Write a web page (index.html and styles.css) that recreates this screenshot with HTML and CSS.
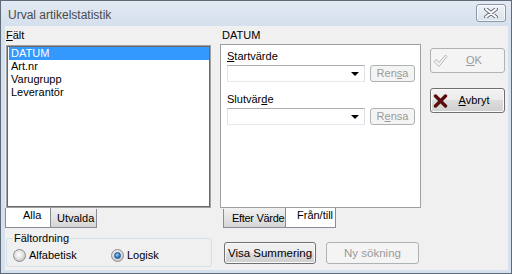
FILE: index.html
```html
<!DOCTYPE html>
<html lang="sv">
<head>
    <meta charset="UTF-8">
    <title>Urval artikelstatistik</title>
    <link rel="stylesheet" href="styles.css">
</head>
<body>
    <div class="window">
        <!-- Title bar -->
        <div class="titlebar">
            <span class="title">Urval artikelstatistik</span>
            <div class="close-btn">
                <svg width="14" height="10" viewBox="0 0 14 10">
                    <path d="M2 1 L12 9 M12 1 L2 9" stroke="#6a7280" stroke-width="4" stroke-linecap="round"/>
                    <path d="M2 1 L12 9 M12 1 L2 9" stroke="#ffffff" stroke-width="2" stroke-linecap="round"/>
                </svg>
            </div>
        </div>

        <div class="client">
            <!-- Left column: field list -->
            <div class="col-left">
                <div class="label"><u>F</u>ält</div>
                <div class="listbox">
                    <div class="item selected">DATUM</div>
                    <div class="item">Art.nr</div>
                    <div class="item">Varugrupp</div>
                    <div class="item">Leverantör</div>
                </div>
                <div class="tabs">
                    <div class="tab active tab-alla">Alla</div>
                    <div class="tab tab-utvalda">Utvalda</div>
                </div>
                <fieldset class="group">
                    <legend>Fältordning</legend>
                    <div class="radios">
                        <label class="radio-opt first"><span class="radio"></span>Alfabetisk</label>
                        <label class="radio-opt"><span class="radio checked"></span>Logisk</label>
                    </div>
                </fieldset>
            </div>

            <!-- Middle column: value range -->
            <div class="col-mid">
                <div class="label label-datum">DATUM</div>
                <div class="panel">
                    <div class="field-label"><u>S</u>tartvärde</div>
                    <div class="field-row">
                        <div class="combo"><span class="arrow"></span></div>
                        <div class="btn disabled rensa">Ren<u>s</u>a</div>
                    </div>
                    <div class="field-label second">Slutvär<u>d</u>e</div>
                    <div class="field-row">
                        <div class="combo"><span class="arrow"></span></div>
                        <div class="btn disabled rensa">R<u>e</u>nsa</div>
                    </div>
                </div>
                <div class="tabs">
                    <div class="tab tab-efter">Efter Värde</div>
                    <div class="tab active tab-fran">Från/till</div>
                </div>
                <div class="bottom-buttons">
                    <div class="btn wide">Visa Summering</div>
                    <div class="btn wide disabled">Ny sökning</div>
                </div>
            </div>

            <!-- Right column: dialog buttons -->
            <div class="col-right">
                <div class="btn dialog disabled">
                    <svg class="icon" width="15" height="14" viewBox="0 0 15 14">
                        <polygon points="1,7.5 3.5,5.5 6,8.5 12.5,1 14,2.5 6,12.5" fill="none" stroke="#b8b8b8" stroke-width="1"/>
                    </svg>
                    <span class="btn-text"><u>O</u>K</span>
                </div>
                <div class="btn dialog">
                    <svg class="icon" width="15" height="14" viewBox="0 0 15 14">
                        <path d="M2.5 2 L12.5 12 M12.5 2 L2.5 12" stroke="#5a0c0c" stroke-width="3.4" stroke-linecap="round"/>
                    </svg>
                    <span class="btn-text"><u>A</u>vbryt</span>
                </div>
            </div>
        </div>
    </div>
</body>
</html>
```

FILE: styles.css
```css
/* Global */
body {
    margin: 0;
    font-family: "Liberation Sans", Arial, sans-serif;
    font-size: 11px;
    color: #000;
}

u {
    text-decoration: underline;
    text-underline-offset: 1px;
}

/* Window frame */
.window {
    width: 512px;
    height: 274px;
    box-sizing: border-box;
    border: 1px solid #5f6b79;
    background: #d6e1ee;
    display: flex;
    flex-direction: column;
}

.titlebar {
    height: 25px;
    display: flex;
    align-items: flex-start;
    justify-content: space-between;
    padding: 0 5px 0 7px;
    background: linear-gradient(#e2e9f3, #d4e0ed);
}

.title {
    font-size: 12px;
    line-height: 14px;
    margin-top: 7px;
    color: #4a4a4a;
}

.close-btn {
    width: 30px;
    height: 18px;
    box-sizing: border-box;
    margin-top: 3px;
    border: 1px solid #8c98a8;
    border-radius: 3px;
    background: linear-gradient(#eef2f7, #d9e2ec);
    box-shadow: inset 0 0 0 1px rgba(255, 255, 255, 0.7);
    display: flex;
    align-items: center;
    justify-content: center;
}

.client {
    flex: 1;
    margin: 0 3px 3px 4px;
    padding: 3px 0 0 1px;
    background: #f0f0f0;
    display: flex;
    align-items: flex-start;
}

.label {
    height: 13px;
    line-height: 13px;
}

/* Left column */
.col-left {
    width: 206px;
    display: flex;
    flex-direction: column;
}

.listbox {
    margin-top: 3px;
    width: 205px;
    height: 163px;
    box-sizing: border-box;
    border: 1px solid #a0a0a0;
    box-shadow: inset 0 0 0 1px #696969;
    background: #fff;
    padding: 1px 1px 0 2px;
}

.item {
    height: 13px;
    line-height: 13px;
    padding-left: 2px;
}

.item.selected {
    background: #3399ff;
    color: #fff;
}

/* Tabs (bottom aligned) */
.tabs {
    display: flex;
    height: 20px;
    align-items: flex-start;
}

.tab {
    box-sizing: border-box;
    height: 19px;
    margin-top: 1px;
    border: 1px solid #898c95;
    border-top: none;
    background: linear-gradient(#f0f0f0, #e3e3e3 50%, #d5d5d5);
    padding: 3px 0 0 6px;
    line-height: 13px;
    white-space: nowrap;
    overflow: hidden;
}

.tab.active {
    height: 20px;
    margin-top: 0;
    background: #fff;
    padding-top: 1px;
}

.tab-alla {
    width: 46px;
    margin-left: -1px;
    padding-left: 17px;
}

.tab-utvalda {
    width: 47px;
    margin-left: -1px;
}

.tab-efter {
    width: 63px;
    margin-left: 3px;
    padding-left: 8px;
    letter-spacing: -0.3px;
}

.tab-fran {
    width: 51px;
    margin-left: -1px;
    padding-left: 11px;
}

/* Group box */
.group {
    margin: 4px 0 0 0;
    padding: 0 6px 4px 6px;
    width: 206px;
    box-sizing: border-box;
    border: 1px solid #d5dfe5;
    border-radius: 3px;
}

.group legend {
    padding: 0 1px;
    margin-left: 0;
    line-height: 13px;
}

.radios {
    display: flex;
    margin-top: 3px;
}

.radio-opt {
    display: flex;
    align-items: center;
    gap: 3px;
    height: 14px;
    line-height: 13px;
}

.radio-opt.first {
    width: 98px;
}

.radio {
    position: relative;
    width: 13px;
    height: 13px;
    box-sizing: border-box;
    border-radius: 50%;
    border: 1px solid #8e8f8f;
    background: radial-gradient(circle at 45% 40%, #ffffff 0%, #e4e4e4 45%, #c8c8c8 70%, #f4f4f4 100%);
}

.radio.checked::after {
    content: "";
    position: absolute;
    left: 2px;
    top: 2px;
    width: 7px;
    height: 7px;
    box-sizing: border-box;
    border-radius: 50%;
    border: 1px solid #1c4e86;
    background: radial-gradient(circle at 40% 35%, #a8d2fb 0%, #3c86d6 50%, #1b5caa 100%);
}

/* Middle column */
.col-mid {
    width: 201px;
    margin-left: 8px;
    display: flex;
    flex-direction: column;
}

.label-datum {
    padding-left: 2px;
}

.panel {
    margin-top: 2px;
    height: 164px;
    box-sizing: border-box;
    border: 1px solid #a0a0a0;
    background: #fff;
    padding: 5px 0 0 6px;
}

.field-label {
    height: 13px;
    line-height: 13px;
}

.field-label.second {
    margin-top: 11px;
}

.field-row {
    display: flex;
    align-items: center;
    margin-top: 2px;
    gap: 5px;
}

.combo {
    position: relative;
    width: 138px;
    height: 17px;
    box-sizing: border-box;
    border: 1px solid;
    border-color: #abadb3 #dbdfe6 #e3e9ef #e2e3ea;
    background: #fff;
}

.combo .arrow {
    position: absolute;
    right: 5px;
    top: 6px;
    width: 0;
    height: 0;
    border-left: 4px solid transparent;
    border-right: 4px solid transparent;
    border-top: 4px solid #000;
}

.bottom-buttons {
    display: flex;
    gap: 10px;
    margin-top: 14px;
    padding-left: 4px;
}

/* Buttons */
.btn {
    box-sizing: border-box;
    border: 1px solid #707070;
    border-radius: 3px;
    background: linear-gradient(#f2f2f2 0%, #ebebeb 50%, #dddddd 50%, #cfcfcf 100%);
    box-shadow: inset 0 0 0 1px #fbfbfb;
    display: flex;
    align-items: center;
    justify-content: center;
    line-height: 13px;
    white-space: nowrap;
}

.btn.disabled {
    border-color: #adb2b5;
    background: #f4f4f4;
    box-shadow: none;
    color: #9a9a9a;
}

.btn.rensa {
    width: 45px;
    height: 17px;
}

.btn.wide {
    width: 92px;
    height: 22px;
    font-size: 11.5px;
}

.btn.wide.disabled {
    width: 93px;
}

/* Right column */
.col-right {
    width: 75px;
    margin-left: 9px;
    display: flex;
    flex-direction: column;
    gap: 15px;
    padding-top: 19px;
}

.btn.dialog {
    height: 25px;
    justify-content: flex-start;
    padding-left: 2px;
}

.btn.dialog .icon {
    flex: none;
}

.btn.dialog .btn-text {
    flex: 1;
    text-align: center;
    padding-right: 4px;
}
```
